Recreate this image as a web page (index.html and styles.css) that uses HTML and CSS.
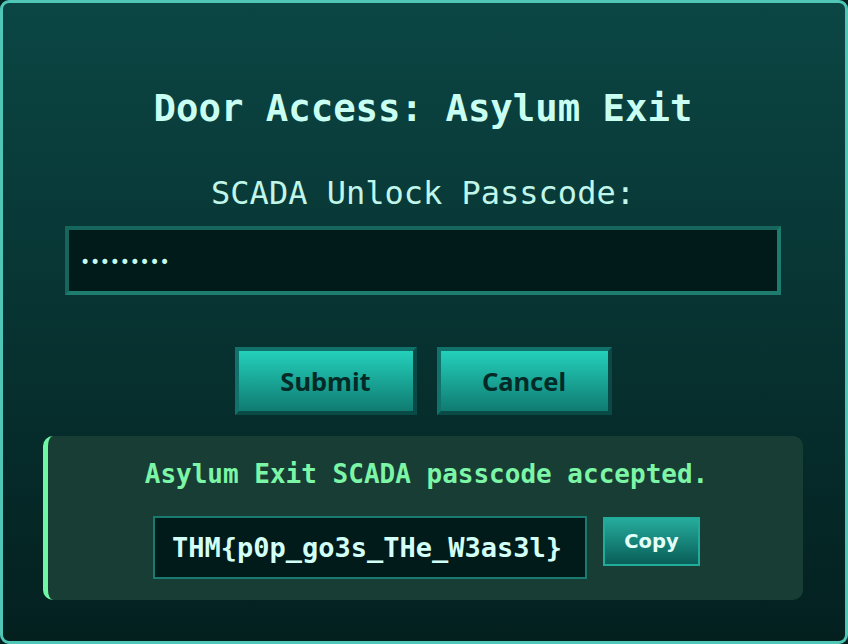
FILE: index.html
```html
<!DOCTYPE html>
<html lang="en">
<head>
    <meta charset="UTF-8">
    <meta name="viewport" content="width=device-width, initial-scale=1.0">
    <title>Door Access</title>
    <link rel="stylesheet" href="styles.css">
</head>
<body>

<div class="panel">
    <h1 class="title">Door Access: Asylum Exit</h1>
    <label class="label" for="passcode">SCADA Unlock Passcode:</label>
    <input id="passcode" class="passcode" type="password" value="123456789">

    <div class="actions">
        <button class="btn submit">Submit</button>
        <button class="btn cancel">Cancel</button>
    </div>

    <div class="result">
        <p class="result-text">Asylum Exit SCADA passcode accepted.</p>
        <div class="flag-row">
            <div class="flag">THM{p0p_go3s_THe_W3as3l}</div>
            <button class="copy">Copy</button>
        </div>
    </div>
</div>

</body>
</html>
```

FILE: styles.css
```css
html, body {
    margin: 0;
    height: 100%;
    background: #03211f;
}
.panel {
    box-sizing: border-box;
    height: 644px;
    padding: 83px 42px 0 40px;
    border: 3px solid #4fc6b6;
    border-radius: 9px;
    background: linear-gradient(#0b4644, #03201f);
    display: flex;
    flex-direction: column;
    align-items: center;
    font-family: "DejaVu Sans Mono", monospace;
}
.title {
    margin: 0;
    font-size: 37.3px;
    line-height: 44px;
    font-weight: bold;
    color: #c9fff2;
}
.label {
    margin-top: 43px;
    font-size: 32px;
    line-height: 40px;
    color: #c0f6ea;
}
.passcode {
    box-sizing: border-box;
    margin-top: 13px;
    width: 716px;
    height: 69px;
    padding: 3px 11px 0 11px;
    border: 4px solid;
    border-color: #17665e #1d7c6e #1d7c6e #17665e;
    background: #011a1a;
    color: #c6fbee;
    font-family: "DejaVu Sans Mono", monospace;
    font-size: 17px;
    letter-spacing: -0.3px;
    outline: none;
}
.actions {
    display: flex;
    gap: 20px;
    margin-top: 52px;
}
.btn {
    box-sizing: border-box;
    height: 68px;
    border: 4px solid;
    border-color: #10726a #0a4a46 #0a4a46 #10726a;
    background: linear-gradient(#24d0bb, #0f7b71);
    color: #042a28;
    font-family: "Noto Sans", sans-serif;
    font-size: 25.5px;
    font-weight: bold;
}
.submit {
    width: 182px;
}
.cancel {
    width: 175px;
}
.result {
    box-sizing: border-box;
    align-self: stretch;
    margin-top: 21px;
    height: 164px;
    padding: 22px 0 0 2px;
    border-left: 5px solid #6ff7a3;
    border-radius: 10px;
    background: #173d35;
    display: flex;
    flex-direction: column;
    align-items: center;
}
.result-text {
    margin: 0;
    font-size: 26px;
    line-height: 32px;
    font-weight: bold;
    color: #7cf5a6;
}
.flag-row {
    display: flex;
    align-items: flex-start;
    gap: 16px;
    margin-top: 26px;
}
.flag {
    box-sizing: border-box;
    width: 434px;
    height: 63px;
    padding: 0 0 0 17px;
    border: 2px solid #197a70;
    background: #011a1a;
    color: #d2fff6;
    font-size: 27px;
    font-weight: bold;
    line-height: 59px;
    white-space: nowrap;
}
.copy {
    box-sizing: border-box;
    margin-top: 1px;
    width: 97px;
    height: 49px;
    border: 2px solid #21ab9b;
    background: linear-gradient(#25ab9c, #095e58);
    color: #e4fff8;
    font-family: "DejaVu Sans", sans-serif;
    font-size: 19.5px;
    font-weight: bold;
}
```
